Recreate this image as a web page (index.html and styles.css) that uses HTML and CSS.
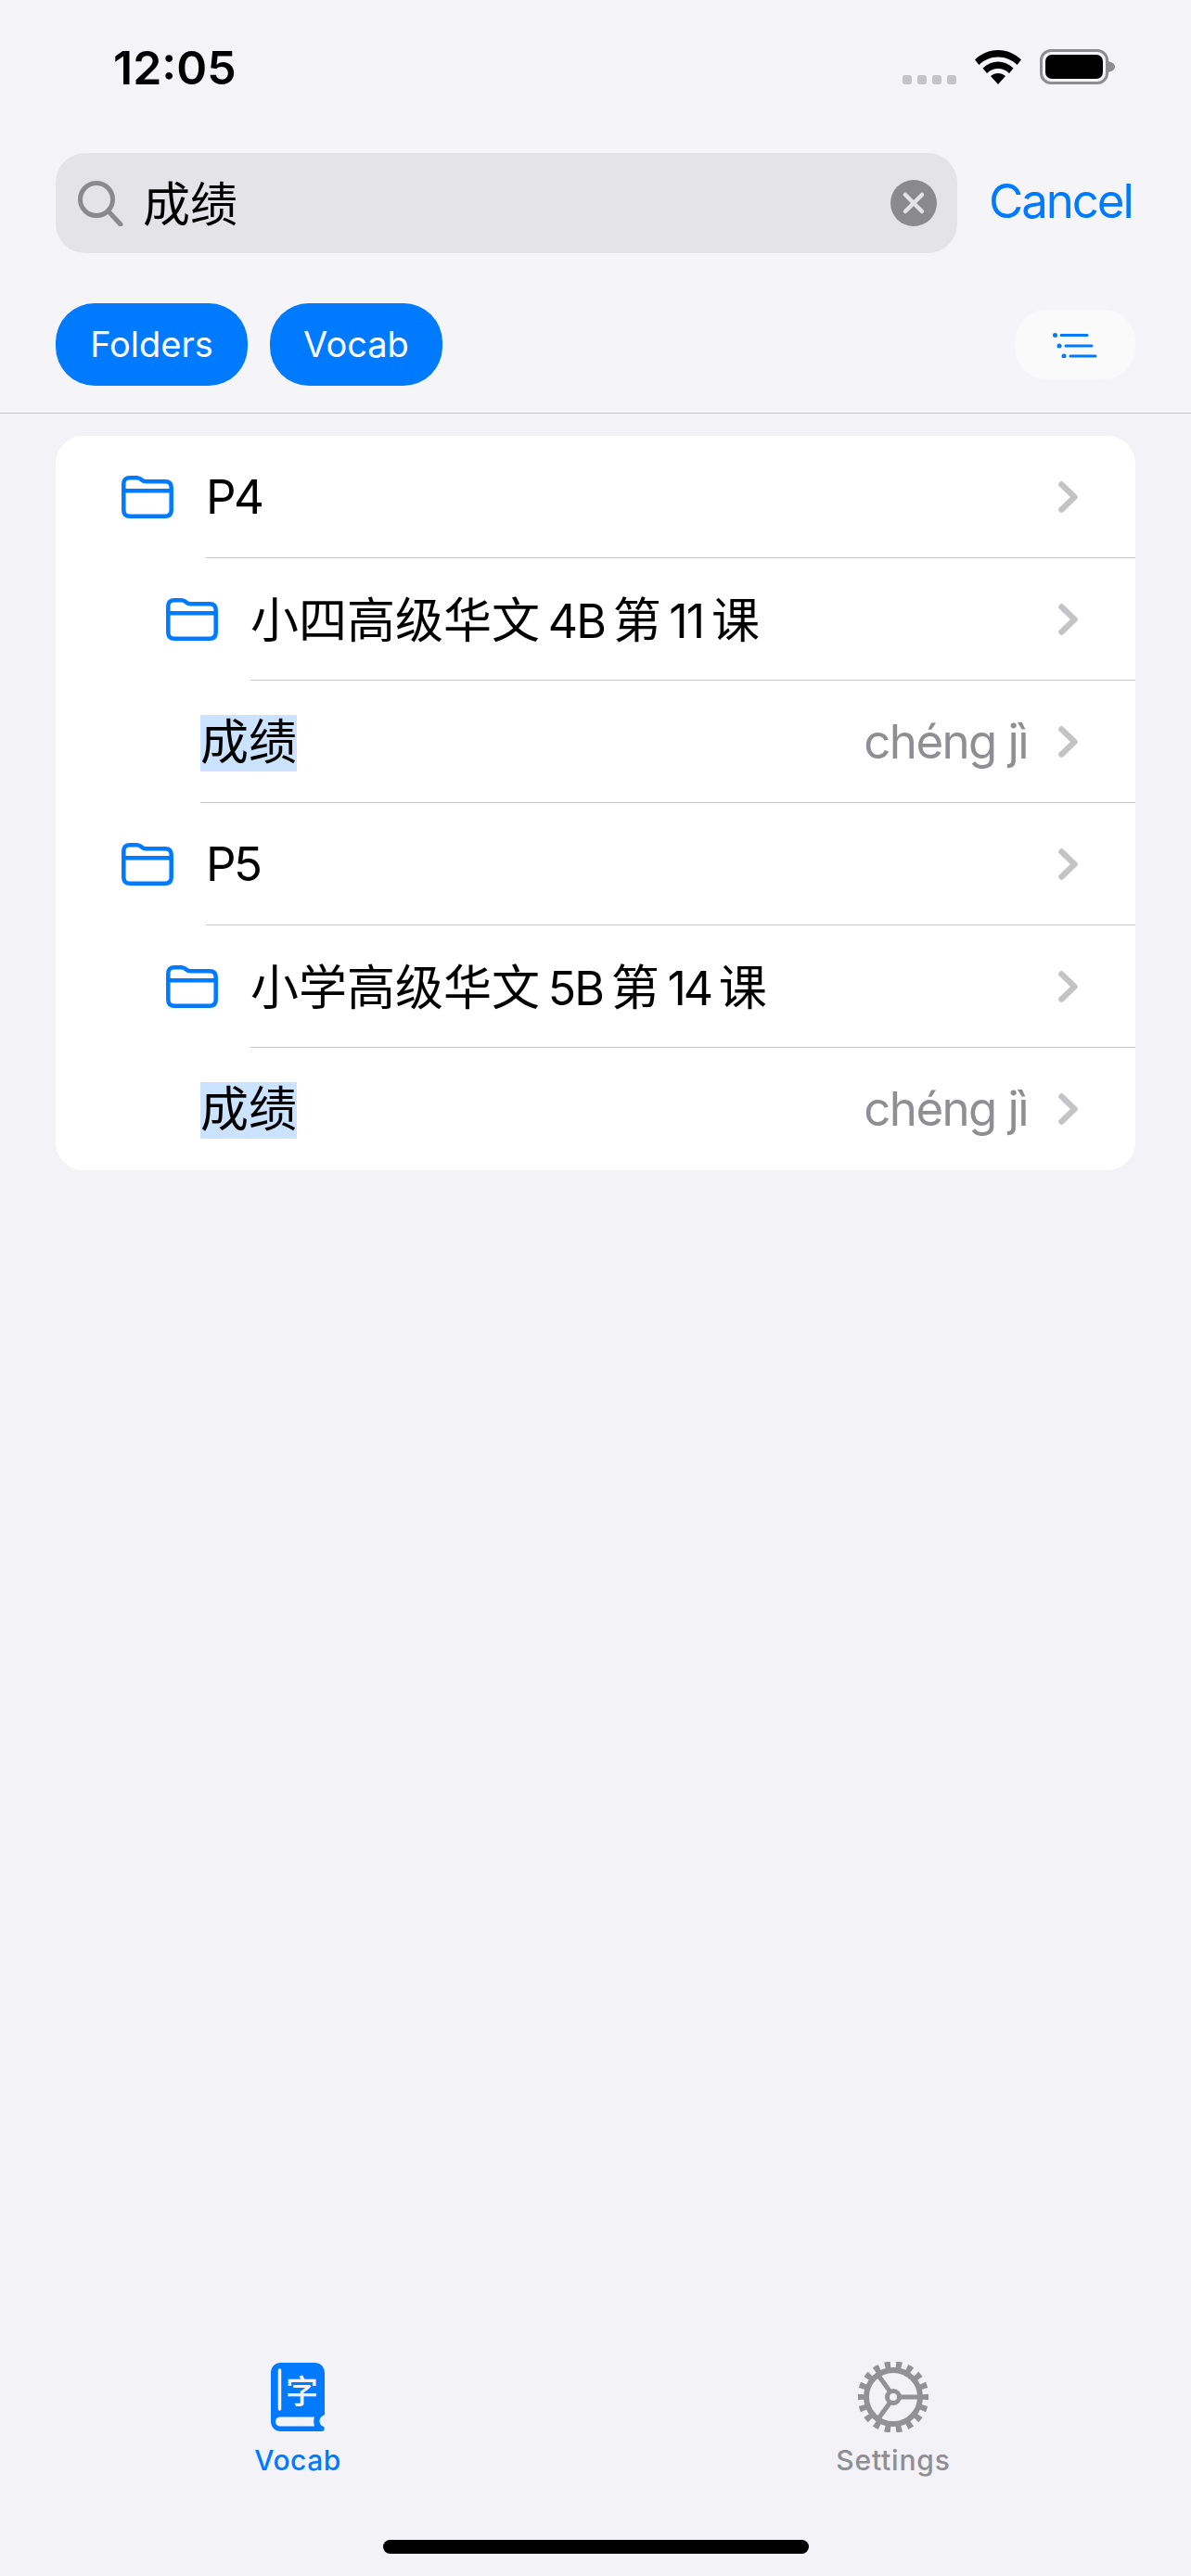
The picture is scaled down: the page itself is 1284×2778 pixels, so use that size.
FILE: index.html
```html
<!DOCTYPE html>
<html lang="zh-Hans">
<head>
<meta charset="utf-8">
<title>Vocab search</title>
<link rel="stylesheet" href="styles.css">
</head>
<body>
<div class="page">
  <header class="header">
    <div class="status">
      <span class="time">12:05</span>
      <div class="status-icons">
        <div class="signal"><i></i><i></i><i></i><i></i></div>
        <svg class="wifi" viewBox="0 0 50 37"><path d="M25 0C15.500 0 7 3.700 0 10.500L4.500 16C10 10.500 17 7.500 25 7.500S40 10.500 45.500 16L50 10.500C43 3.700 34.500 0 25 0ZM25 12.500C19 12.500 13.500 14.800 8.500 19.500L13 25C16.500 21.500 20.500 20 25 20S33.500 21.500 37 25L41.500 19.500C36.500 14.800 31 12.500 25 12.500ZM25 25C22 25 19.500 26 17 28L25 37L33 28C30.500 26 28 25 25 25Z"/></svg>
        <div class="battery"><div class="battery-fill"></div></div>
        <svg class="battery-nub" viewBox="0 0 7 12"><path d="M0 0C4 1 7 3 7 6S4 11 0 12Z"/></svg>
      </div>
    </div>
    <div class="search-row">
      <div class="search">
        <svg class="search-icon" viewBox="0 0 49 49"><circle cx="20" cy="20" r="17.500"/><path d="M32.500 32.500L46 47"/></svg>
        <span class="search-text">成绩</span>
        <svg class="clear" viewBox="0 0 50 50"><circle class="clear-bg" cx="25" cy="25" r="25"/><path class="clear-x" d="M16 16L34 34M34 16L16 34"/></svg>
      </div>
      <span class="cancel">Cancel</span>
    </div>
    <div class="filter-row">
      <span class="pill pill-folders">Folders</span>
      <span class="pill pill-vocab">Vocab</span>
      <button class="filter-btn" type="button">
        <svg viewBox="0 0 48 28"><g class="f-lines"><path d="M9 3.500H37M14 15H42M19 26H46"/></g><g class="f-dots"><circle cx="2.500" cy="3.500" r="2.500"/><circle cx="7" cy="15" r="2.500"/><circle cx="12" cy="26" r="2.500"/></g></svg>
      </button>
    </div>
  </header>

  <main class="main">
    <section class="card">
      <div class="row row-l0">
        <svg class="folder" viewBox="0 0 56 46"><path d="M9 2.300H16.500C19 2.300 20 3 21.500 4.300C23 5.700 24 6.300 26.500 6.300H47C51.500 6.300 53.700 8.500 53.700 13V37C53.700 41.500 51.500 43.700 47 43.700H9C4.500 43.700 2.300 41.500 2.300 37V9C2.300 4.500 4.500 2.300 9 2.300ZM2.300 16.300H53.700"/></svg>
        <span class="label">P4</span>
        <svg class="chev" viewBox="0 0 21 34"><path d="M3.500 3.500L17.500 17L3.500 30.500"/></svg>
      </div>
      <div class="row row-l1">
        <svg class="folder" viewBox="0 0 56 46"><path d="M9 2.300H16.500C19 2.300 20 3 21.500 4.300C23 5.700 24 6.300 26.500 6.300H47C51.500 6.300 53.700 8.500 53.700 13V37C53.700 41.500 51.500 43.700 47 43.700H9C4.500 43.700 2.300 41.500 2.300 37V9C2.300 4.500 4.500 2.300 9 2.300ZM2.300 16.300H53.700"/></svg>
        <span class="label">小四高级华文 <span class="lat">4B</span> 第 <span class="lat">11</span> 课</span>
        <svg class="chev" viewBox="0 0 21 34"><path d="M3.500 3.500L17.500 17L3.500 30.500"/></svg>
      </div>
      <div class="row row-l2">
        <span class="label"><mark class="hit">成绩</mark></span>
        <span class="pinyin">chéng jì</span>
        <svg class="chev" viewBox="0 0 21 34"><path d="M3.500 3.500L17.500 17L3.500 30.500"/></svg>
      </div>
      <div class="row row-l0">
        <svg class="folder" viewBox="0 0 56 46"><path d="M9 2.300H16.500C19 2.300 20 3 21.500 4.300C23 5.700 24 6.300 26.500 6.300H47C51.500 6.300 53.700 8.500 53.700 13V37C53.700 41.500 51.500 43.700 47 43.700H9C4.500 43.700 2.300 41.500 2.300 37V9C2.300 4.500 4.500 2.300 9 2.300ZM2.300 16.300H53.700"/></svg>
        <span class="label">P5</span>
        <svg class="chev" viewBox="0 0 21 34"><path d="M3.500 3.500L17.500 17L3.500 30.500"/></svg>
      </div>
      <div class="row row-l1">
        <svg class="folder" viewBox="0 0 56 46"><path d="M9 2.300H16.500C19 2.300 20 3 21.500 4.300C23 5.700 24 6.300 26.500 6.300H47C51.500 6.300 53.700 8.500 53.700 13V37C53.700 41.500 51.500 43.700 47 43.700H9C4.500 43.700 2.300 41.500 2.300 37V9C2.300 4.500 4.500 2.300 9 2.300ZM2.300 16.300H53.700"/></svg>
        <span class="label">小学高级华文 <span class="lat">5B</span> 第 <span class="lat lat-wide">14</span> 课</span>
        <svg class="chev" viewBox="0 0 21 34"><path d="M3.500 3.500L17.500 17L3.500 30.500"/></svg>
      </div>
      <div class="row row-l2 row-last">
        <span class="label"><mark class="hit">成绩</mark></span>
        <span class="pinyin">chéng jì</span>
        <svg class="chev" viewBox="0 0 21 34"><path d="M3.500 3.500L17.500 17L3.500 30.500"/></svg>
      </div>
    </section>
  </main>

  <nav class="tabbar">
    <div class="tab tab-active">
      <div class="book">
        <svg class="book-svg" viewBox="0 0 58 74"><path class="book-body" fill-rule="evenodd" d="M11 0H47C53.500 0 58 4.500 58 11V56C54 58 52.500 60 52.500 63C52.500 66 54 68 57 69C58.500 70 58 74 55 74H11C4.500 74 0 69.500 0 63V11C0 4.500 4.500 0 11 0ZM11 58.500C7 58.500 5 60.500 5 63.500C5 66.500 7 68.500 11 68.500H47C46 65 46 61.500 47 58.500Z"/><path class="book-spine" d="M9.500 8V50"/></svg>
        <span class="book-char">字</span>
      </div>
      <span class="tab-label">Vocab</span>
    </div>
    <div class="tab">
      <svg class="gear" viewBox="0 0 76 76"><circle class="gear-teeth" cx="38" cy="38" r="34" pathLength="18"/><circle class="gear-ring" cx="38" cy="38" r="29"/><path class="gear-spokes" d="M45 38H66M34.500 32L20 12M34.500 44L20 64"/><circle class="gear-hub" cx="38" cy="38" r="6.500"/></svg>
      <span class="tab-label">Settings</span>
    </div>
  </nav>
  <div class="home-wrap"><div class="home"></div></div>
</div>
</body>
</html>
```

FILE: styles.css
```css
* { box-sizing: border-box; }
html, body { margin: 0; padding: 0; }
body {
  background: #f2f2f7;
  font-family: Inter, "Noto Sans CJK SC", sans-serif;
  color: #000;
}
.page {
  width: 1284px;
  height: 2778px;
  display: flex;
  flex-direction: column;
  overflow: hidden;
}

/* header */
.header {
  height: 446px;
  background: #f5f5f8;
  border-bottom: 1px solid #c6c6c8;
  flex: none;
}
.status {
  height: 165px;
  display: flex;
  justify-content: space-between;
  padding: 43px 82px 0 122px;
}
.time {
  font-size: 50px;
  font-weight: 600;
  line-height: 60px;
  letter-spacing: 0;
  height: 60px;
}
.status-icons {
  display: flex;
  align-items: flex-start;
  padding-top: 10px;
}
.signal {
  display: flex;
  gap: 6px;
  margin: 28px 20px 0 0;
}
.signal i {
  width: 10px;
  height: 10px;
  border-radius: 3px;
  background: #c4c4c6;
}
.wifi { width: 50px; height: 37px; margin: 1px 20px 0 0; fill: #000; }
.battery {
  width: 74px;
  height: 38px;
  border: 3px solid #8e8e90;
  border-radius: 12px;
  padding: 3px;
}
.battery-fill { width: 100%; height: 100%; background: #000; border-radius: 7px; }
.battery-nub { width: 7px; height: 12px; margin: 13px 0 0 0; fill: #8e8e90; }

.search-row {
  display: flex;
  align-items: center;
  padding-left: 60px;
}
.search {
  width: 972px;
  height: 108px;
  background: #e4e4e7;
  border-radius: 32px;
  display: flex;
  align-items: center;
  padding: 0 22px 0 24px;
}
.search-icon {
  width: 49px;
  height: 49px;
  fill: none;
  stroke: #8a8a8e;
  stroke-width: 5;
  stroke-linecap: round;
  flex: none;
}
.search-text {
  font-size: 51px;
  line-height: 60px;
  margin: 3px 0 0 21px;
  flex: 1;
}
.clear { width: 50px; height: 50px; flex: none; }
.clear-bg { fill: #8a8a8e; }
.clear-x { stroke: #e4e4e7; stroke-width: 4.500; stroke-linecap: round; fill: none; }
.cancel {
  font-size: 51px;
  color: #007aff;
  margin: -6px 0 0 34px;
  letter-spacing: -2.100px;
}

.filter-row {
  display: flex;
  align-items: center;
  padding: 54px 60px 0;
  height: 143px;
}
.pill {
  height: 89px;
  border-radius: 42px;
  background: #007aff;
  color: #fff;
  font-size: 38px;
  line-height: 88px;
  text-align: center;
}
.pill-folders { width: 207px; margin-right: 24px; }
.pill-vocab { width: 186px; }
.filter-btn {
  margin-left: auto;
  width: 130px;
  height: 75px;
  border: 0;
  padding: 0;
  border-radius: 34px;
  background: #fafafb;
  display: flex;
  align-items: center;
  justify-content: center;
}
.filter-btn svg { width: 48px; height: 28px; }
.f-lines { stroke: #007aff; stroke-width: 3; fill: none; stroke-linecap: round; }
.f-dots { fill: #007aff; }

/* list */
.main { flex: 1; padding: 24px 60px 0; }
.card {
  background: #fff;
  border-radius: 30px;
  overflow: hidden;
}
.row {
  height: 132px;
  display: flex;
  align-items: center;
  position: relative;
  padding-right: 62px;
}
.row::after {
  content: "";
  position: absolute;
  right: 0;
  bottom: 0;
  height: 1px;
  background: #c6c6c8;
}
.row-last::after { display: none; }
.row-l0 { padding-left: 71px; }
.row-l0::after { left: 162px; }
.row-l1 { padding-left: 119px; }
.row-l1::after { left: 210px; }
.row-l2 { padding-left: 156px; }
.row-l2::after { left: 156px; }
.folder {
  width: 56px;
  height: 46px;
  flex: none;
  fill: none;
  stroke: #007aff;
  stroke-width: 4.500;
}
.label {
  font-size: 51px;
  line-height: 62px;
  flex: 1;
  white-space: nowrap;
}
.row-l0 .label { margin-left: 35px; letter-spacing: -2.500px; }
.row-l1 .label {
  margin: 4px 0 0 35px;
  font-size: 52px;
  word-spacing: -6px;
}
.lat { letter-spacing: -1.800px; font-size: 50px; }
.lat-wide { letter-spacing: -3px; }
.hit {
  background: #cbe3ff;
  color: #000;
  display: inline-block;
  width: 104px;
  height: 61px;
  line-height: 60px;
  text-align: center;
  vertical-align: top;
  font-size: 52px;
  margin-top: 3px;
}
.pinyin {
  font-size: 51px;
  line-height: 62px;
  color: #8e8e93;
  margin-right: 33px;
  letter-spacing: -1.600px;
}
.chev {
  width: 21px;
  height: 34px;
  flex: none;
  fill: none;
  stroke: #c4c4c6;
  stroke-width: 6.500;
  stroke-linecap: round;
  stroke-linejoin: round;
}

/* tabs */
.tabbar {
  flex: none;
  display: grid;
  grid-template-columns: 1fr 1fr;
  height: 130px;
}
.tab {
  display: flex;
  flex-direction: column;
  align-items: center;
  color: #8e8e93;
}
.tab-active { color: #007aff; }
.book { position: relative; width: 58px; height: 74px; }
.book-svg { display: block; width: 58px; height: 74px; }
.book-body { fill: #007aff; }
.book-spine { stroke: #f2f2f7; stroke-width: 3.500; stroke-linecap: round; fill: none; }
.book-char {
  position: absolute;
  left: 16px;
  top: 7px;
  width: 34px;
  font-size: 35px;
  line-height: 44px;
  font-weight: 500;
  text-align: center;
  color: #f2f2f7;
  font-family: "Noto Sans CJK SC", sans-serif;
}
.gear { display: block; width: 76px; height: 76px; margin-top: -1px; fill: none; stroke: #929296; }
.gear-teeth { stroke-width: 9; stroke-dasharray: 0.5 0.5; stroke-dashoffset: 0.25; }
.gear-ring { stroke-width: 6; }
.gear-spokes { stroke-width: 5; }
.gear-hub { stroke-width: 5; }
.tab-label {
  font-size: 30px;
  line-height: 36px;
  margin-top: 13px;
  letter-spacing: 0.5px;
  font-weight: 500;
}
.tab:not(.tab-active) .tab-label { letter-spacing: 0.8px; margin-top: 12px; }
.home-wrap {
  flex: none;
  height: 100px;
  display: flex;
  justify-content: center;
  padding-top: 61px;
}
.home { width: 459px; height: 15px; border-radius: 8px; background: #000; }
```
